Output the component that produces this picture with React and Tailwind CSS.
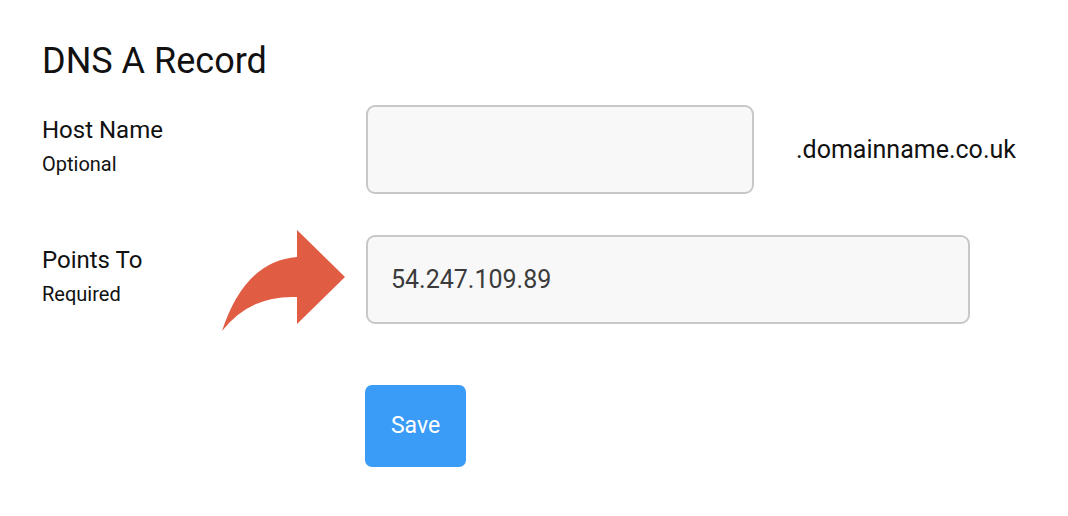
export default function App() {
  return (
    <main className="min-h-screen bg-white pl-[42px] pt-[43px] font-['Roboto',_'Liberation_Sans',_sans-serif] text-[#111]">
      <h1 className="text-[36px] font-normal leading-none">DNS A Record</h1>

      <div className="mt-[26px] flex items-start">
        <div className="w-[324px] pt-[13px]">
          <p className="text-[24px] leading-none">Host Name</p>
          <p className="mt-[12px] text-[20px] leading-none">Optional</p>
        </div>
        <input
          readOnly
          className="h-[89px] w-[388px] rounded-[9px] border-2 border-[#c8c8c8] bg-[#f8f8f8] px-[23px] text-[25px] text-[#3b3b3b] outline-none"
        />
        <span className="ml-[42px] mt-[32px] text-[25px] leading-none">.domainname.co.uk</span>
      </div>

      <div className="mt-[41px] flex items-start">
        <div className="relative w-[324px] pt-[13px]">
          <p className="text-[24px] leading-none">Points To</p>
          <p className="mt-[12px] text-[20px] leading-none">Required</p>
          <svg
            className="absolute left-[173px] top-[-10px]"
            width="135"
            height="112"
            viewBox="0 0 135 112"
          >
            <path
              d="M7 106 Q30 36 82 32 L82 5 L130 52 L82 99 L82 72 Q35 70 7 106 Z"
              fill="#e05c42"
            />
          </svg>
        </div>
        <input
          readOnly
          value="54.247.109.89"
          className="h-[89px] w-[604px] rounded-[9px] border-2 border-[#c8c8c8] bg-[#f8f8f8] px-[23px] text-[25px] text-[#3b3b3b] outline-none"
        />
      </div>

      <div className="mt-[61px] pl-[323px]">
        <button className="h-[82px] w-[101px] rounded-[7px] bg-[#3b9cf8] text-[23px] text-white">
          Save
        </button>
      </div>
    </main>
  );
}
